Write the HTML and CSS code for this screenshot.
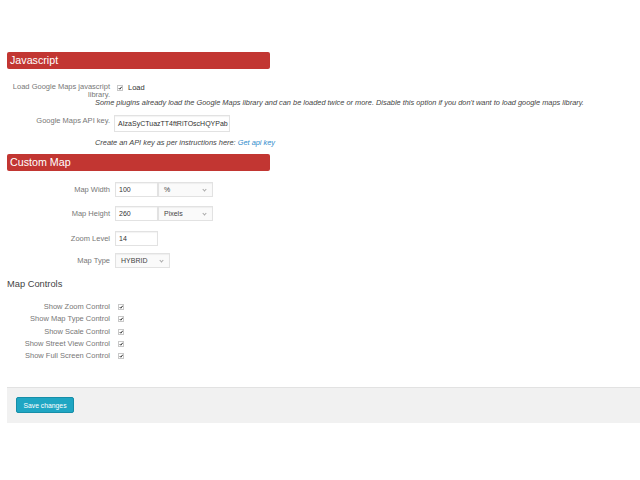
FILE: index.html
```html
<!DOCTYPE html>
<html lang="en">
<head>
  <meta charset="UTF-8">
  <title>Map Settings</title>
  <link rel="stylesheet" href="styles.css">
</head>
<body>
  <!-- Settings page -->
  <div class="wrap">
    <h2 class="section-title">Javascript</h2>

    <div class="field field-load">
      <label class="field-label">Load Google Maps javascript library.</label>
      <div class="field-control">
        <span class="check"><svg viewBox="0 0 6 6"><path d="M1 3.2 L2.4 4.6 L5 1.3"/></svg></span>
        <span class="check-text">Load</span>
      </div>
    </div>
    <p class="note">Some plugins already load the Google Maps library and can be loaded twice or more. Disable this option if you don't want to load google maps library.</p>

    <div class="field field-key">
      <label class="field-label">Google Maps API key.</label>
      <div class="field-control">
        <span class="text-input key-input">AIzaSyCTuazTT4ftRiTOscHQYPab</span>
      </div>
    </div>
    <p class="note note-key">Create an API key as per instructions here: <a href="#">Get api key</a></p>

    <h2 class="section-title section-map">Custom Map</h2>

    <div class="field field-size row-width">
      <label class="field-label">Map Width</label>
      <div class="field-control">
        <span class="text-input num-input">100</span>
        <span class="select unit-select">%<i class="caret"></i></span>
      </div>
    </div>
    <div class="field field-size row-height">
      <label class="field-label">Map Height</label>
      <div class="field-control">
        <span class="text-input num-input">260</span>
        <span class="select unit-select">Pixels<i class="caret"></i></span>
      </div>
    </div>
    <div class="field field-size row-zoom">
      <label class="field-label">Zoom Level</label>
      <div class="field-control">
        <span class="text-input num-input">14</span>
      </div>
    </div>
    <div class="field field-size row-type">
      <label class="field-label">Map Type</label>
      <div class="field-control">
        <span class="select type-select">HYBRID<i class="caret"></i></span>
      </div>
    </div>

    <h3 class="subsection">Map Controls</h3>

    <div class="check-list">
      <div class="check-row"><label class="field-label">Show Zoom Control</label><span class="check"><svg viewBox="0 0 6 6"><path d="M1 3.2 L2.4 4.6 L5 1.3"/></svg></span></div>
      <div class="check-row"><label class="field-label">Show Map Type Control</label><span class="check"><svg viewBox="0 0 6 6"><path d="M1 3.2 L2.4 4.6 L5 1.3"/></svg></span></div>
      <div class="check-row"><label class="field-label">Show Scale Control</label><span class="check"><svg viewBox="0 0 6 6"><path d="M1 3.2 L2.4 4.6 L5 1.3"/></svg></span></div>
      <div class="check-row"><label class="field-label">Show Street View Control</label><span class="check"><svg viewBox="0 0 6 6"><path d="M1 3.2 L2.4 4.6 L5 1.3"/></svg></span></div>
      <div class="check-row"><label class="field-label">Show Full Screen Control</label><span class="check"><svg viewBox="0 0 6 6"><path d="M1 3.2 L2.4 4.6 L5 1.3"/></svg></span></div>
    </div>

    <div class="actions">
      <button class="save-button" type="button">Save changes</button>
    </div>
  </div>
</body>
</html>
```

FILE: styles.css
```css
/* Base */
* {
  margin: 0;
  padding: 0;
  box-sizing: border-box;
}

body {
  font-family: "Liberation Sans", Arial, sans-serif;
  background: #fff;
  color: #666;
}

.wrap {
  padding: 52px 0 0 7px;
}

/* Section headers */
.section-title {
  width: 263px;
  height: 17px;
  line-height: 17px;
  padding-left: 3px;
  background: #c23632;
  border-radius: 2px;
  color: #fff;
  font-size: 10.7px;
  font-weight: normal;
}

.section-map {
  margin-top: 7px;
}

.subsection {
  margin-top: 11px;
  font-size: 9.3px;
  line-height: 11px;
  font-weight: normal;
  color: #444;
}

/* Field rows */
.field {
  display: flex;
  align-items: flex-start;
}

.field-label {
  width: 103px;
  flex: none;
  text-align: right;
  font-size: 7.5px;
  line-height: 8px;
  color: #777;
}

.field-label + .field-control {
  margin-left: 5px;
}

.field-control {
  display: flex;
  align-items: center;
}

.field-load {
  margin-top: 14px;
}

.field-load .field-control {
  height: 9px;
}

.check-text {
  margin-left: 5px;
  font-size: 7.5px;
  color: #333;
}

.note {
  margin-left: 88px;
  font-size: 7.4px;
  line-height: 8px;
  font-style: italic;
  color: #444;
}

.note a {
  color: #2e8bcc;
  text-decoration: none;
}

.note-key {
  margin-top: 7px;
}

.field-key {
  margin-top: 8px;
}

.field-key .field-label {
  padding-top: 2px;
}

/* Inputs */
.text-input,
.select {
  display: flex;
  align-items: center;
  height: 15px;
  padding: 0 3px;
  background: #fff;
  border: 1px solid #e2e2e2;
  box-shadow: inset 0 1px 1px rgba(0, 0, 0, 0.05);
  font-size: 7px;
  color: #333;
  white-space: nowrap;
}

.key-input {
  width: 116px;
  height: 17px;
  margin-left: -1px;
}

.num-input {
  width: 43px;
}

.select {
  position: relative;
  background: #fafafa;
  color: #444;
}

.unit-select,
.type-select {
  width: 55px;
  padding-left: 5px;
}

.caret {
  position: absolute;
  right: 6px;
  top: 5px;
  width: 3px;
  height: 3px;
  border-right: 1px solid #aaa;
  border-bottom: 1px solid #aaa;
  transform: rotate(45deg);
}

.field-size {
  align-items: center;
}

.row-width {
  margin-top: 11px;
}

.row-height {
  margin-top: 9px;
}

.row-zoom {
  margin-top: 10px;
}

.row-type {
  margin-top: 7px;
}

/* Checkboxes */
.check {
  display: inline-flex;
  width: 6px;
  height: 6px;
  margin-left: 2px;
  background: #fff;
  border: 1px solid #c8c8c8;
}

.check svg {
  width: 6px;
  height: 6px;
  margin: -1px 0 0 -0.5px;
  fill: none;
  stroke: #222;
  stroke-width: 1.3;
}

.check-list {
  margin-top: 11px;
}

.check-row {
  display: flex;
  align-items: center;
  height: 12.3px;
}

.check-row .check {
  margin-left: 8px;
}

/* Footer actions */
.actions {
  margin-top: 25px;
  height: 36px;
  padding: 9px 0 0 9px;
  background: #f1f1f1;
  border-top: 1px solid #e2e2e2;
}

.save-button {
  display: block;
  width: 58px;
  height: 16px;
  background: #1fa6c3;
  border: 1px solid #168ea8;
  border-radius: 2px;
  color: #fff;
  font-family: "Liberation Sans", Arial, sans-serif;
  font-size: 6.8px;
  cursor: pointer;
}
```
